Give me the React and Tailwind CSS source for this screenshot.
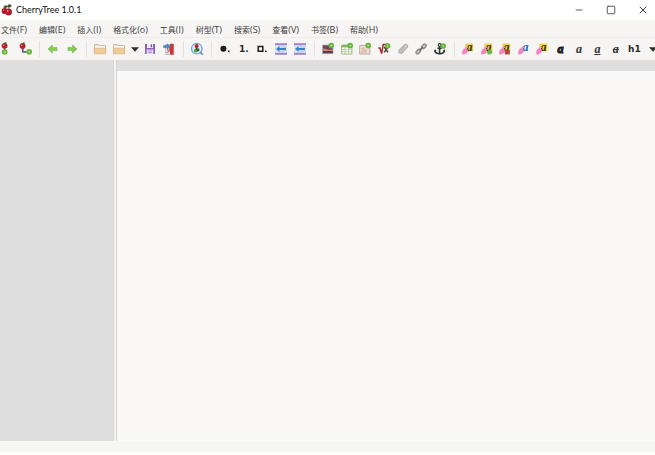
import React from 'react'
import { Minus, Square, X } from 'lucide-react'

const MENUS = [
  ['文件', 'F'],
  ['编辑', 'E'],
  ['插入', 'I'],
  ['格式化', 'o'],
  ['工具', 'I'],
  ['树型', 'T'],
  ['搜索', 'S'],
  ['查看', 'V'],
  ['书签', 'B'],
  ['帮助', 'H'],
]

function Svg({ children }) {
  return (
    <svg viewBox="0 0 12 12" className="w-3 h-3 shrink-0 overflow-visible" fill="none" aria-hidden="true">
      {children}
    </svg>
  )
}

function Cherry() {
  return (
    <svg viewBox="0 0 12 12" className="w-3 h-3 shrink-0" fill="none" aria-hidden="true">
      <path d="M3 6C3.5 4 5 3 6.5 2.5M8.5 7C8.5 5 7.5 3.5 6.5 2.5" stroke="#54492c" strokeWidth=".8" />
      <path d="M2.2 3.4C3.4.8 5.4.6 7 2.6 5.4 4.4 3.6 4.6 2.2 3.4Z" fill="#3d6b35" />
      <path d="M6.2 2.6C7-.2 9.2-.2 10.6 1.4 9.8 3.8 8 4 6.2 2.6Z" fill="#47503a" />
      <circle cx="3.6" cy="6.9" r="3" fill="#a81420" />
      <circle cx="7.6" cy="8" r="3.4" fill="#b51c26" />
      <circle cx="6.6" cy="7" r=".9" fill="#ee8d8d" />
      <circle cx="2.6" cy="6.1" r=".8" fill="#dd6a6a" />
    </svg>
  )
}

const Plus = ({ x = 9, y = 2.6 }) => (
  <g>
    <circle cx={x} cy={y} r="2.8" fill="#62b13a" />
    <path d={`M${x - 1.4} ${y}h2.8M${x} ${y - 1.4}v2.8`} stroke="#a5dc7c" strokeWidth=".9" />
  </g>
)

function NodeAdd() {
  return (
    <Svg>
      <path d="M1.6 3v6" stroke="#555" strokeWidth="1.4" />
      <circle cx="1.6" cy="2.8" r="2.9" fill="#b8202a" />
      <path d="M.6.6 3.4-.4" stroke="#3d6b35" strokeWidth="1.2" />
      <circle cx=".8" cy="2.2" r=".8" fill="#e67b7b" />
      <Plus x={1.6} y={9} />
    </Svg>
  )
}

function SubnodeAdd() {
  return (
    <Svg>
      <path d="M2.8 4v4.8H7" stroke="#6b6b78" strokeWidth="1.8" />
      <circle cx="2.6" cy="3" r="2.9" fill="#b8202a" />
      <path d="M1.8.8 4.6-.4" stroke="#3d6b35" strokeWidth="1.2" />
      <circle cx="1.8" cy="2.4" r=".8" fill="#e67b7b" />
      <Plus x={9.2} y={8.8} />
    </Svg>
  )
}

function Arrow({ right }) {
  return (
    <Svg>
      <path
        d={right ? 'M11 6 6.6 2v2.4H2v3.2h4.6V10Z' : 'M1 6l4.4-4v2.4H10v3.2H5.4V10Z'}
        fill="#86cb52"
        stroke="#72b548"
        strokeWidth=".6"
      />
    </Svg>
  )
}

function Folder() {
  return (
    <Svg>
      <path d="M.5 10.5V1.6h4l1 1h6v7.9Z" fill="#e9dfce" stroke="#b9aa94" strokeWidth=".7" />
      <path d="M1.2 3.2h9.6v2H1.2Z" fill="#fffdf8" />
      <path d="M.3 5h11.4v5.9H.3Z" fill="#efcc9c" stroke="#d3b384" strokeWidth=".6" />
    </Svg>
  )
}

function Caret() {
  return (
    <svg viewBox="0 0 8 5" className="w-2 h-[5px] shrink-0" aria-hidden="true">
      <path d="M0 .3h8L4 4.7Z" fill="#2e2e2e" />
    </svg>
  )
}

function Save() {
  return (
    <Svg>
      <path d="M1 1h10v10H1Z" fill="#8e5fc0" />
      <path d="M3 1h6v4H3Z" fill="#f5effb" />
      <path d="M6.7 1.6h1.3v2.6H6.7Z" fill="#6f45a0" />
      <path d="M2.6 6.5h6.8V11H2.6Z" fill="#e6daf2" />
      <path d="M4 8h4M4 9.5h4" stroke="#9b78c4" strokeWidth=".7" />
    </Svg>
  )
}

function ExportPdf() {
  return (
    <Svg>
      <path d="M2.5 1.5h8.2v10H2.5Z" fill="#e4dfe2" stroke="#b4afb6" strokeWidth=".6" />
      <path d="M7 .8h3.6v10.8H7Z" fill="#c6363a" />
      <path d="M3.6 9.8c2.6-1 3.6-3.4 2.6-5.6M4 7c1.2-.4 3 .6 3.6 2.4" stroke="#cf5054" strokeWidth=".9" />
      <path d="M.6 2.6h3.5V.8l3.4 2.6-3.4 2.8V4.6H.6Z" fill="#4f8cc6" stroke="#376fa8" strokeWidth=".5" />
    </Svg>
  )
}

function FindNode() {
  return (
    <Svg>
      <circle cx="5.8" cy="5.6" r="5.3" fill="#e0edf7" stroke="#7ba7cf" strokeWidth="1.3" />
      <path d="M9 9.2l2.8 2.4" stroke="#6f98bd" strokeWidth="2" />
      <path d="M5.6 2v7" stroke="#44403c" strokeWidth="2" />
      <circle cx="5.6" cy="3" r="2" fill="#ba232b" />
      <circle cx="4.6" cy="7.8" r="1.7" fill="#4c9b3b" />
      <circle cx="7" cy="6.8" r="1.6" fill="#316f36" />
    </Svg>
  )
}

function Rule() {
  return (
    <Svg>
      <path d="M0 .2h12v2.2H0ZM0 9.6h12v2.2H0Z" fill="#a27fcf" />
      <path d="M0 2.4h12v7.2H0Z" fill="#d5e5f4" />
      <path d="M5.5 4h6M5.5 8h6" stroke="#a9bfd8" strokeWidth=".8" />
      <path d="M1 6l3.6-3v2H11v2H4.6v2Z" fill="#3f80cc" />
    </Svg>
  )
}

function ImageAdd() {
  return (
    <Svg>
      <path d="M.5 2h10.5v8.6H.5Z" fill="#74435c" stroke="#b3adb0" strokeWidth=".8" />
      <path d="M1 5.4c3 .4 6 2 9.6 1v1.8H1Z" fill="#df8168" />
      <path d="M1 8h9.6v2.2H1Z" fill="#56404e" />
      <Plus x={9.2} />
    </Svg>
  )
}

function TableAdd() {
  return (
    <Svg>
      <path d="M.7 2h10.2v9H.7Z" fill="#fff" stroke="#8bb06f" strokeWidth=".9" />
      <path d="M.7 2h10.2v2.4H.7Z" fill="#83b960" />
      <path d="M.7 6.4h10.2M.7 8.7h10.2M4 4v7M7.6 4v7" stroke="#abc69a" strokeWidth=".8" />
      <Plus x={9.2} />
    </Svg>
  )
}

function CodeAdd() {
  return (
    <Svg>
      <path d="M.7 2.6h10.2V11H.7Z" fill="#f1e0d6" stroke="#a29a95" strokeWidth=".8" />
      <path d="M2 5.2h4M3 7h5M2 8.9h6" stroke="#d4a08e" strokeWidth=".9" />
      <Plus x={9.2} />
    </Svg>
  )
}

function LatexAdd() {
  return (
    <Svg>
      <path d="M.3 5h1.6L3.6 10.6 5.2 1.6H11" stroke="#a52a2e" strokeWidth="1.5" />
      <path d="M6.2 4l3.8 5.4M10.2 4l-4 5.4" stroke="#474038" strokeWidth="1.4" />
      <Plus x={9.6} y={3} />
    </Svg>
  )
}

function Clip() {
  return (
    <Svg>
      <path
        d="M9.4 5.2 5.4 9.6C3.4 11.6.6 9.2 2.5 7L7.2 2.1C9 .4 11.8 2.6 10 4.7L5.6 9C4.5 10 3.3 8.6 4.3 7.6L7.8 4"
        fill="#d4d4d4"
        stroke="#b0b0b0"
        strokeWidth="1.2"
      />
    </Svg>
  )
}

function Chain() {
  return (
    <Svg>
      <rect x="6.2" y="1.8" width="5.4" height="3.2" rx="1.6" transform="rotate(-45 8.9 3.4)" fill="#c4c4c4" stroke="#8c8c8c" strokeWidth="1.3" />
      <rect x=".6" y="7" width="5.4" height="3.2" rx="1.6" transform="rotate(-45 3.3 8.6)" fill="#c4c4c4" stroke="#8c8c8c" strokeWidth="1.3" />
      <path d="M4.4 7.6l3.4-3.4" stroke="#666" strokeWidth="1.6" />
    </Svg>
  )
}

function AnchorAdd() {
  return (
    <Svg>
      <circle cx="5.6" cy="2" r="1.4" stroke="#2d3236" strokeWidth="1.1" />
      <path d="M5.6 3.4v7.4M3.4 5.2h4.4M.9 7.4c.4 4.4 9 4.4 9.6 0" stroke="#2d3236" strokeWidth="1.6" />
      <path d="M0 8.4l1-2.2 1.8 1.8ZM11.4 8.4l-1-2.2-1.8 1.8Z" fill="#2d3236" />
      <Plus x={9.2} y={3} />
    </Svg>
  )
}

// Letter "a" with a brush, used by the colour and format buttons
function Brush({ bg, ink = '#3a3423', badge }) {
  return (
    <Svg>
      {bg && <path d="M3.4.6h7.8v7.8H3.4Z" fill={bg} />}
      <text x="4.4" y="7.8" fontFamily="Liberation Serif, serif" fontSize="12" fontWeight="bold" fontStyle="italic" fill={ink}>
        a
      </text>
      <path d="M.4 11.4C-.4 8.6.8 5.8 3.2 5c2.6.2 3.4 2.6 2 4.6-1 1.4-2.8 2-4.8 1.8Z" fill="#f283bd" />
      <path d="M3.2 5.4 5.6 3.8" stroke="#e5a3b8" strokeWidth="1.8" />
      {badge === 'add' && <path d="M5.6 9.2h5.6M8.4 6.6v5" stroke="#6ab545" strokeWidth="2.4" />}
      {badge === 'remove' && <path d="M5.8 7h5v4.4h-5Z" fill="#b5403c" />}
    </Svg>
  )
}

function Letter({ className = '', children }) {
  return <span className={`font-['Liberation_Serif',serif] font-bold italic text-[12px] leading-3 text-[#333] ${className}`}>{children}</span>
}

function Mark({ children }) {
  return <span className="font-['DejaVu_Sans',sans-serif] font-bold text-[9px] leading-3 text-[#2a2a2a]">{children}</span>
}

const GROUPS = [
  {
    width: 'w-[34px]',
    items: [
      ['Add node', <NodeAdd />],
      ['Add subnode', <SubnodeAdd />],
    ],
  },
  {
    width: 'w-[37px]',
    items: [
      ['Go back', <Arrow />],
      ['Go forward', <Arrow right />],
    ],
  },
  {
    width: 'w-[87px]',
    items: [
      ['New instance', <Folder />],
      ['Open', <Folder />],
      ['Recent documents', <Caret />],
      ['Save', <Save />],
      ['Export to PDF', <ExportPdf />],
    ],
  },
  { width: 'w-[18px]', items: [['Find in nodes', <FindNode />]] },
  {
    width: 'w-[93px]',
    items: [
      [
        'Bulleted list',
        <Svg>
          <circle cx="4.4" cy="5.8" r="3" fill="#1c1c1c" />
          <path d="M9 7.4h1.6V9H9Z" fill="#1c1c1c" />
        </Svg>,
      ],
      ['Numbered list', <Mark>1.</Mark>],
      [
        'To-do list',
        <Svg>
          <path d="M2.2 3.6h4.6v4.6H2.2Z" stroke="#1c1c1c" strokeWidth="1.5" />
          <path d="M9 7.4h1.6V9H9Z" fill="#1c1c1c" />
        </Svg>,
      ],
      ['Insert rule', <Rule />],
      ['Insert contents', <Rule />],
    ],
  },
  {
    width: 'w-[130px]',
    items: [
      ['Insert image', <ImageAdd />],
      ['Insert table', <TableAdd />],
      ['Insert codebox', <CodeAdd />],
      ['Insert formula', <LatexAdd />],
      ['Insert file', <Clip />],
      ['Insert link', <Chain />],
      ['Insert anchor', <AnchorAdd />],
    ],
  },
  {
    width: 'w-[203px]',
    items: [
      ['Apply latest format', <Brush bg="#f0cf45" />],
      ['Copy format', <Brush bg="#f0cf45" badge="add" />],
      ['Remove format', <Brush bg="#f0cf45" badge="remove" />],
      ['Text colour', <Brush ink="#2b5fb4" />],
      ['Background colour', <Brush bg="#f6d32d" />],
      ['Bold', <Letter className="[-webkit-text-stroke:1px_#1a1a1a]">a</Letter>],
      ['Italic', <Letter>a</Letter>],
      ['Underline', <Letter className="underline decoration-1 underline-offset-1">a</Letter>],
      ['Strikethrough', <Letter className="line-through decoration-1">a</Letter>],
      ['Heading', <Mark>h1</Mark>],
      ['More headings', <Caret />],
    ],
  },
]

export default function App() {
  return (
    <div className="h-screen flex flex-col overflow-hidden bg-white font-['Open_Sans','Noto_Sans_CJK_SC',sans-serif] text-[#3c3c3c]">
      <header className="h-5 shrink-0 flex items-center justify-between bg-white">
        <div className="flex items-center gap-[3px] pl-px">
          <Cherry />
          <h1 className="font-['Lato',sans-serif] text-[9px] leading-3 text-[#111]">CherryTree 1.0.1</h1>
        </div>
        <div className="flex gap-2">
          <button aria-label="Minimize" className="w-6 h-5 flex items-center justify-center">
            <Minus className="w-[10px] h-[10px]" strokeWidth={2} />
          </button>
          <button aria-label="Maximize" className="w-6 h-5 flex items-center justify-center">
            <Square className="w-[10px] h-[10px]" strokeWidth={2} />
          </button>
          <button aria-label="Close" className="w-6 h-5 flex items-center justify-center">
            <X className="w-3 h-3" strokeWidth={2} />
          </button>
        </div>
      </header>

      <nav className="h-[18px] shrink-0 flex items-center gap-3 pl-px pt-[2px] bg-[#f6f5f4] border-b border-[#ececea]">
        {MENUS.map(([label, key]) => (
          <button key={label} className="flex items-center text-[8px] leading-3 whitespace-nowrap">
            {label}
            <span className="text-[9px]">({key})</span>
          </button>
        ))}
      </nav>

      <div className="h-[22px] shrink-0 flex items-center overflow-hidden bg-[#f6f5f4]">
        {GROUPS.map((g, i) => (
          <React.Fragment key={i}>
            {i > 0 && (
              <div className="w-[10px] h-4 shrink-0 flex justify-center">
                <div className="w-px bg-[#e2e1df]" />
              </div>
            )}
            <div className={`flex shrink-0 ${g.width}`}>
              {g.items.map(([label, icon]) => (
                <button
                  key={label}
                  aria-label={label}
                  className={`h-4 flex items-center justify-center ${label === 'Recent documents' ? 'w-[13px]' : 'flex-1 min-w-0'}`}
                >
                  {icon}
                </button>
              ))}
            </div>
          </React.Fragment>
        ))}
      </div>

      <div className="flex-1 min-h-0 flex">
        <aside className="w-[113px] shrink-0 bg-[#dfdfdf]" />
        <div className="w-1 shrink-0 bg-[#f6f5f4] border-x border-[#d5d3d0]" />
        <main className="flex-1 min-w-0 flex flex-col bg-[#faf9f7]">
          <div className="h-[11px] bg-[#dfdfdf]" />
        </main>
      </div>

      <footer className="h-[11px] shrink-0 mb-[3px] bg-[#f6f6f3]" />
    </div>
  )
}
